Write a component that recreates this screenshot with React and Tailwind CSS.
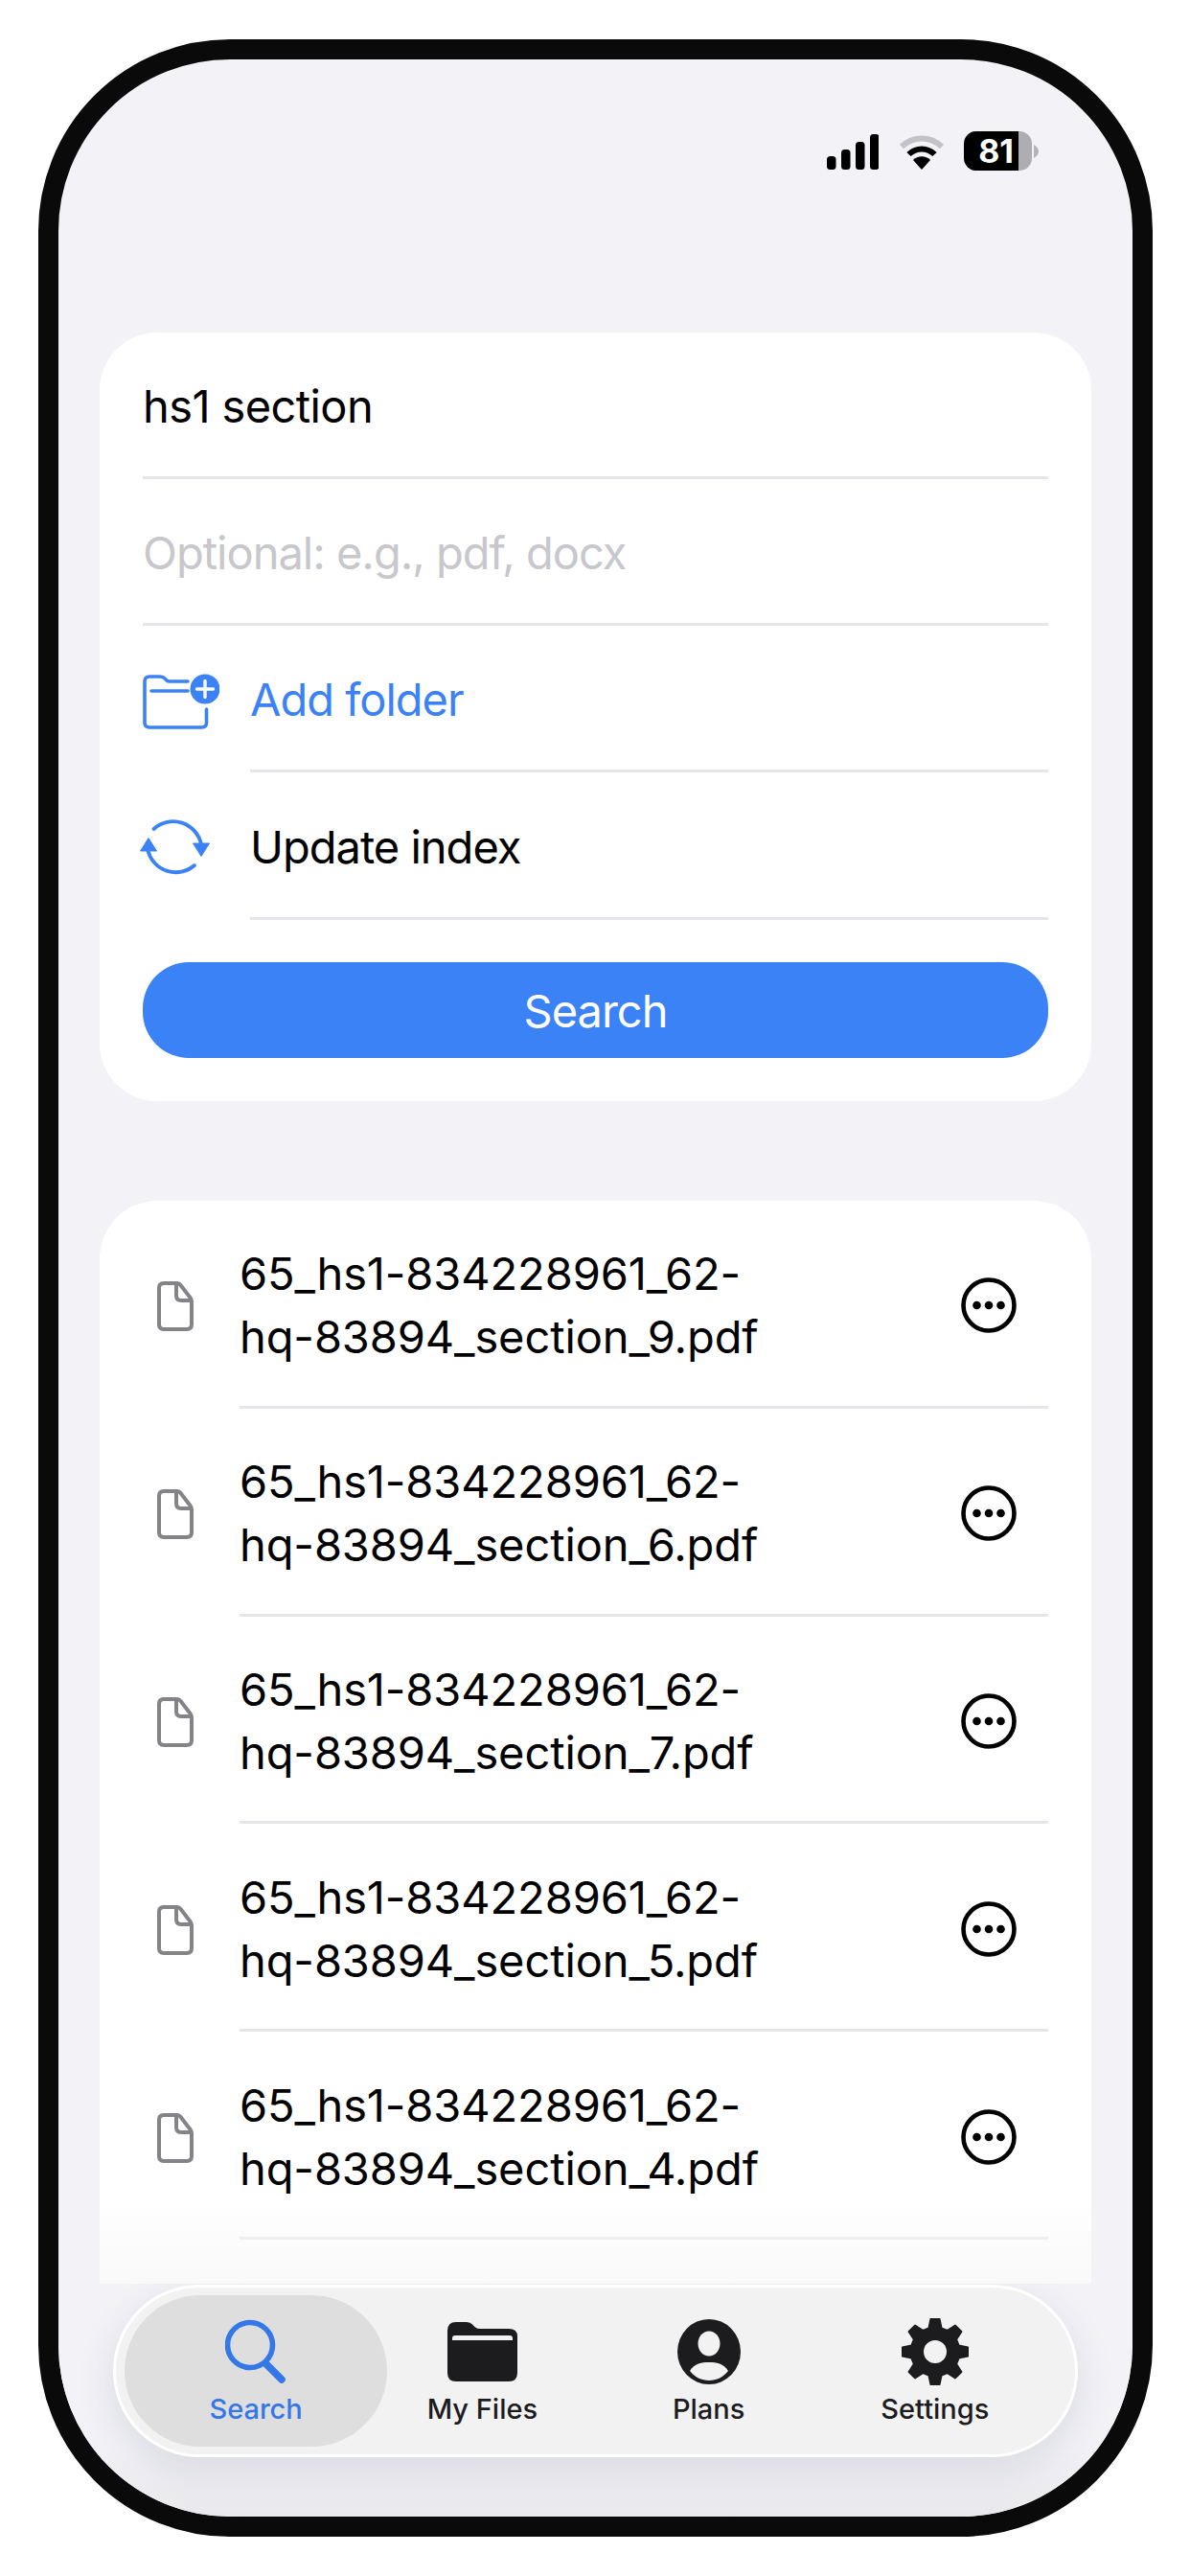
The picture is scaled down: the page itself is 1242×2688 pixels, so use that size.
import React from "react";

const FILES = [
  "65_hs1-834228961_62-hq-83894_section_9.pdf",
  "65_hs1-834228961_62-hq-83894_section_6.pdf",
  "65_hs1-834228961_62-hq-83894_section_7.pdf",
  "65_hs1-834228961_62-hq-83894_section_5.pdf",
  "65_hs1-834228961_62-hq-83894_section_4.pdf",
];

const StatusIcons = () => (
  <div className="flex items-center">
    {/* signal */}
    <svg width="54" height="37" viewBox="0 0 54 37" fill="#000" className="mt-[2px]">
      <rect x="0" y="23" width="9.5" height="14" rx="3.5" />
      <rect x="15" y="16" width="9.5" height="21" rx="3.5" />
      <rect x="30" y="8" width="9.5" height="29" rx="3.5" />
      <rect x="45" y="0" width="9.5" height="37" rx="3.5" />
    </svg>
    {/* wifi */}
    <svg width="48" height="37" viewBox="0 0 48 37" className="ml-[21px] mt-[2px]">
      <path d="M3 13 C15 1.5 33 1.5 45 13" fill="none" stroke="#c2c2c7" strokeWidth="6" />
      <path d="M10.5 21 C18 13.5 30 13.5 37.5 21" fill="none" stroke="#000" strokeWidth="6" />
      <path d="M15 27 C20 22 28 22 33 27 L24 37 Z" fill="#000" />
    </svg>
    {/* battery */}
    <div className="ml-[20px] flex items-center">
      <div className="flex h-[41px] w-[71px] overflow-hidden rounded-[13px]">
        <div className="flex w-[57px] items-center justify-end bg-black pr-[5px] font-['Inter',sans-serif] text-[34px] font-bold leading-none text-white">
          81
        </div>
        <div className="flex-1 bg-[#aeaeb2]" />
      </div>
      <svg width="5" height="14" viewBox="0 0 5 14" className="ml-[2px]">
        <path d="M0 0 C3 2 5 4 5 7 C5 10 3 12 0 14 Z" fill="#b4b4b8" />
      </svg>
    </div>
  </div>
);

const FolderPlusIcon = () => (
  <svg width="80" height="58" viewBox="0 0 80 58" fill="none">
    <path
      d="M66.5 37 V51 Q66.5 56 61.5 56 H7 Q2 56 2 51 V8 Q2 3 7 3 H18 Q21 3 23 5 L25 7 Q26 8 28 8 H47"
      stroke="#3b82f6"
      strokeWidth="3.6"
      strokeLinecap="round"
    />
    <path d="M9 18 H47" stroke="#3b82f6" strokeWidth="3.6" strokeLinecap="round" />
    <circle cx="65" cy="16" r="15.5" fill="#3b82f6" />
    <path d="M65 7.5 V24.5 M56.5 16 H73.5" stroke="#fff" strokeWidth="3.4" strokeLinecap="round" />
  </svg>
);

const SyncIcon = () => (
  <svg width="73" height="64" viewBox="0 0 73 64" fill="none">
    <path d="M14.5 13 A30 30 0 0 1 64 29" stroke="#3b82f6" strokeWidth="3.8" strokeLinecap="round" />
    <path d="M57 51 A30 30 0 0 1 8.500 36" stroke="#3b82f6" strokeWidth="3.8" strokeLinecap="round" />
    <path d="M55.500 28 H72.500 L64 41.500 Z" fill="#3b82f6" stroke="#3b82f6" strokeWidth="1" strokeLinejoin="round" />
    <path d="M0.500 36 H17.500 L9 22.500 Z" fill="#3b82f6" stroke="#3b82f6" strokeWidth="1" strokeLinejoin="round" />
  </svg>
);

const FileIcon = () => (
  <svg width="38" height="52" viewBox="0 0 38 52" fill="none">
    <path
      d="M7 2 H21 Q23 2 24.500 4 L34.500 17 Q36 19 36 21 V45 Q36 50 31 50 H7 Q2 50 2 45 V7 Q2 2 7 2 Z"
      stroke="#848488"
      strokeWidth="4"
    />
    <path d="M20 2.500 V15 Q20 20 25 20 H35.500" stroke="#848488" strokeWidth="4" />
  </svg>
);

const MoreIcon = () => (
  <svg width="58" height="60" viewBox="0 0 58 60" fill="none">
    <circle cx="29" cy="30" r="26.500" stroke="#000" strokeWidth="4.600" />
    <circle cx="16.500" cy="30" r="4.300" fill="#000" />
    <circle cx="29" cy="30" r="4.300" fill="#000" />
    <circle cx="41.500" cy="30" r="4.300" fill="#000" />
  </svg>
);

const SearchIcon = () => (
  <svg width="64" height="68" viewBox="0 0 64 68" fill="none">
    <circle cx="26" cy="27" r="23.500" stroke="#3478e8" strokeWidth="5.600" />
    <path d="M43 47 L59 63" stroke="#3478e8" strokeWidth="7.500" strokeLinecap="round" />
  </svg>
);

const FolderIcon = () => (
  <svg width="73" height="62" viewBox="0 0 73 62">
    <path
      d="M9 0 H20 Q24 0 26 2.500 L29 5.500 Q31 7 34 7 H64 Q73 7 73 15 V53 Q73 62 64 62 H9 Q0 62 0 53 V9 Q0 0 9 0 Z"
      fill="#1c1c1e"
    />
    <path d="M5 19 V17 Q5 14 8 14 H65 Q68 14 68 17 V19 Z" fill="#f2f2f2" />
  </svg>
);

const PersonIcon = () => (
  <svg width="66" height="68" viewBox="0 0 66 68">
    <ellipse cx="33" cy="34" rx="33" ry="34" fill="#1c1c1e" />
    <ellipse cx="33" cy="25.500" rx="11.500" ry="13" fill="#f2f2f2" />
    <path d="M13 54 C18 46 25 45 33 45 C41 45 48 46 53 54 C48 60.500 41 64 33 64 C25 64 18 60.500 13 54 Z" fill="#f2f2f2" />
  </svg>
);

// 8 tooth gear, tooth straight up
const gearPath = () => {
  const pts = [];
  for (let i = 0; i < 8; i++) {
    const a = (i * Math.PI) / 4 - Math.PI / 2;
    const steps = [
      [-0.26, 25.5],
      [-0.13, 34.5],
      [0.13, 34.5],
      [0.26, 25.5],
    ];
    steps.forEach(([d, r]) => {
      pts.push(`${(35 + r * Math.cos(a + d)).toFixed(1)} ${(35 + r * Math.sin(a + d)).toFixed(1)}`);
    });
  }
  return `M${pts.join(" L")} Z`;
};

const GearIcon = () => (
  <svg width="70" height="70" viewBox="0 0 70 70">
    <path d={gearPath()} fill="#1c1c1e" stroke="#1c1c1e" strokeWidth="2" strokeLinejoin="round" />
    <circle cx="35" cy="35" r="12" fill="#f2f2f2" />
  </svg>
);

const TabItem = ({ icon, label, active }) => (
  <div className="relative flex flex-col items-center pt-[24px]">
    {active && <div className="absolute -inset-x-[19px] inset-y-0 rounded-[79px] bg-[#dedede]" />}
    <div className="relative flex h-[70px] items-center">{icon}</div>
    <span
      className={`relative mt-[7px] text-[29px] font-medium leading-[36px] ${active ? "text-[#3478e8]" : "text-[#1c1c1e]"}`}
    >
      {label}
    </span>
  </div>
);

const App = () => {
  return (
    <div className="h-[2688px] w-[1242px] bg-white pl-[40px] pt-[41px] font-['Inter',sans-serif] text-black">
      <div className="flex h-[2606px] w-[1163px] flex-col overflow-hidden rounded-[200px] border-[21px] border-[#0a0a0a] bg-[#f2f2f7]">
        {/* Status bar */}
        <div className="flex h-[285px] shrink-0 items-start justify-end pr-[98px] pt-[75px]">
          <StatusIcons />
        </div>

        {/* Scrolling content */}
        <div className="relative flex min-h-0 flex-1 flex-col px-[43px]">
          {/* Search form */}
          <div className="shrink-0 rounded-[60px] bg-white px-[45px] pb-[45px] text-[47px] tracking-[-1px]">
            <div className="flex h-[153px] items-center border-b-[3px] border-[#e5e5ea] pt-[5px] tracking-[-0.6px]">
              hs1 section
            </div>
            <div className="flex h-[153px] items-center border-b-[3px] border-[#e5e5ea] pt-[5px] text-[#c7c7cc]">
              Optional: e.g., pdf, docx
            </div>
            <div className="flex h-[153px] items-center">
              <div className="w-[112px] shrink-0 pt-[5px]">
                <FolderPlusIcon />
              </div>
              <div className="flex h-full flex-1 items-center border-b-[3px] border-[#e5e5ea] pt-[5px] text-[#3b82f6]">
                Add folder
              </div>
            </div>
            <div className="flex h-[154px] items-center">
              <div className="-ml-[3px] w-[115px] shrink-0 pt-[2px]">
                <SyncIcon />
              </div>
              <div className="flex h-full flex-1 items-center border-b-[3px] border-[#e5e5ea] pt-[5px]">
                Update index
              </div>
            </div>
            <button className="mt-[44px] flex h-[100px] w-full items-center justify-center rounded-[48px] bg-[#3b82f6] pt-[3px] text-white">
              Search
            </button>
          </div>

          {/* Results */}
          <div className="mt-[104px] flex min-h-0 flex-1 flex-col overflow-hidden rounded-t-[60px] bg-white">
            {FILES.map((name) => (
              <div key={name} className="flex h-[216.8px] shrink-0 items-stretch">
                <div className="flex w-[146px] shrink-0 items-center pl-[60px] pt-[4px]">
                  <FileIcon />
                </div>
                <div className="mr-[45px] flex flex-1 items-center justify-between border-b-[3px] border-[#e5e5ea] pr-[33px] pt-[5px]">
                  <div className="w-[575px] text-[47px] leading-[66px] tracking-[-0.1px]">{name}</div>
                  <MoreIcon />
                </div>
              </div>
            ))}
          </div>
          <div className="absolute inset-x-[43px] bottom-0 h-[90px] bg-gradient-to-b from-white/0 to-[#f9f9f9]" />
        </div>

        {/* Tab bar */}
        <div className="h-[243px] shrink-0 bg-gradient-to-b from-[#f2f2f7] from-70% to-[#e8e8ed] px-[57px] pt-[1px]">
          <div className="h-[180px] rounded-[90px] border-[3px] border-white bg-[#f2f2f2] px-[28px] py-[8px] shadow-[0_14px_40px_rgba(60,60,90,0.13)]">
            <div className="grid h-full grid-cols-4">
              <TabItem active icon={<SearchIcon />} label="Search" />
              <TabItem icon={<FolderIcon />} label="My Files" />
              <TabItem icon={<PersonIcon />} label="Plans" />
              <TabItem icon={<GearIcon />} label="Settings" />
            </div>
          </div>
        </div>
      </div>
    </div>
  );
};

export default App;
